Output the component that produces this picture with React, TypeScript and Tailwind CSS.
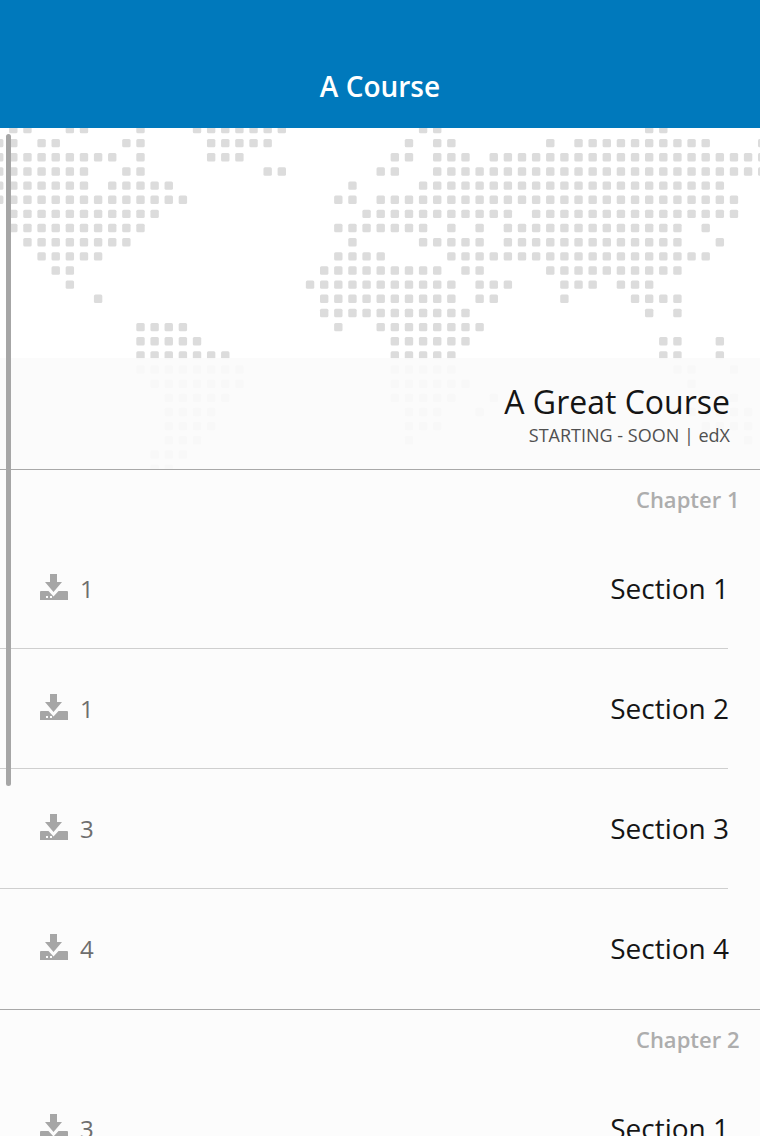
import React from 'react';

// Dot map: for each row, [first, last] column ranges
const mapRows: [number, number][][] = [
  [[1, 2], [5, 6], [10, 10], [14, 20], [30, 31], [46, 47]],
  [[0, 1], [3, 4], [9, 10], [15, 19], [29, 29], [31, 32], [39, 39], [41, 50], [54, 54]],
  [[0, 8], [10, 10], [15, 17], [28, 29], [31, 33], [35, 54]],
  [[0, 6], [9, 10], [19, 20], [27, 28], [31, 54]],
  [[0, 6], [8, 12], [25, 25], [30, 51]],
  [[0, 13], [24, 25], [27, 52]],
  [[1, 11], [26, 36], [38, 52]],
  [[1, 10], [24, 30], [32, 32], [34, 34], [36, 48], [50, 50]],
  [[2, 9], [25, 25], [30, 34], [36, 48], [51, 51]],
  [[3, 7], [24, 27], [32, 50]],
  [[4, 5], [23, 31], [33, 34], [39, 48]],
  [[5, 5], [22, 32], [34, 36], [40, 42], [44, 46]],
  [[7, 7], [23, 32], [34, 35], [40, 40], [45, 48]],
  [[23, 33], [46, 46], [48, 48]],
  [[10, 13], [24, 24], [27, 34]],
  [[10, 14], [28, 33], [47, 48], [51, 51]],
  [[10, 16], [28, 32], [47, 48], [51, 51]],
  [[10, 17], [28, 32], [48, 49], [52, 52]],
  [[11, 17], [28, 33], [49, 49]],
  [[12, 16], [28, 32], [35, 35], [52, 52]],
  [[12, 15], [29, 31], [34, 34], [48, 53]],
  [[12, 15], [29, 31], [50, 53]],
  [[12, 14], [29, 29], [53, 53]],
  [[11, 13]],
  [[11, 12]],
];

const DotMap = () => (
  <svg className="absolute top-0 left-0" width="760" height="341" viewBox="0 0 760 341">
    {mapRows.map((ranges, r) =>
      ranges.map(([from, to]) =>
        Array.from({ length: to - from + 1 }, (_, i) => (
          <rect
            key={`${r}-${from + i}`}
            x={-5 + 14.13 * (from + i)}
            y={-3.2 + 14.15 * r}
            width="8.4"
            height="8.4"
            rx="1.5"
            fill="#dcdcdc"
          />
        ))
      )
    )}
  </svg>
);

const DownloadIcon = () => (
  <svg className="mb-[4px]" width="28" height="26" viewBox="0 0 28 26" fill="#a6a6a6">
    <path d="M10 0h7v8h5l-8.5 10L5 8h5z" />
    <path d="M1 17h7.5l5 5.5 5-5.5H27a1 1 0 0 1 1 1v8H0v-8a1 1 0 0 1 1-1z" />
    <rect x="6" y="22" width="2" height="2" fill="#fcfcfc" />
    <rect x="10" y="22" width="2" height="2" fill="#fcfcfc" />
  </svg>
);

const SectionRow = ({ count, title, last = false }: { count: number; title: string; last?: boolean }) => (
  <div>
    <div className="flex h-[119px] items-center justify-between pr-[31px] pl-[40px]">
      <div className="flex items-center gap-[12px] text-[24px] text-[#6e6e6e]">
        <DownloadIcon />
        <span>{count}</span>
      </div>
      <span className="mb-[2px] text-[28px] text-[#151515]">{title}</span>
    </div>
    <div className={`mr-[32px] h-px ${last ? '' : 'bg-[#cfcfcf]'}`} />
  </div>
);

const ChapterTitle = ({ title }: { title: string }) => (
  <div className="h-[60px] border-t border-[#a8a8a8] pt-[12px] pr-[20.5px] text-right text-[22px] leading-[34px] font-semibold text-[#adadad]">
    {title}
  </div>
);

export default function App() {
  return (
    <div className="relative h-[1136px] w-[760px] overflow-hidden bg-[#fcfcfc] font-['Open_Sans',sans-serif]">
      <header className="flex h-[128px] items-end justify-center bg-[#0079bc] pb-[24px] text-[28px] leading-[36px] font-semibold text-white">
        A Course
      </header>

      {/* Hero con el mapa */}
      <div className="relative h-[341px] overflow-hidden bg-white pt-[230px]">
        <DotMap />
        <div className="relative h-[111px] bg-[#fbfbfb]/90 pt-[22px] pr-[30px] text-right">
          <h1 className="text-[32px] leading-[44px] text-[#151515]">A Great Course</h1>
          <p className="text-[18px] leading-[22px] text-[#505050]">STARTING - SOON | edX</p>
        </div>
      </div>

      <ChapterTitle title="Chapter 1" />
      <SectionRow count={1} title="Section 1" />
      <SectionRow count={1} title="Section 2" />
      <SectionRow count={3} title="Section 3" />
      <SectionRow count={4} title="Section 4" last />
      <ChapterTitle title="Chapter 2" />
      <SectionRow count={3} title="Section 1" />

      {/* Barra de scroll */}
      <div className="absolute top-[134px] left-[6px] h-[652px] w-[5px] rounded-full bg-[#a6a6a6]" />
    </div>
  );
}
